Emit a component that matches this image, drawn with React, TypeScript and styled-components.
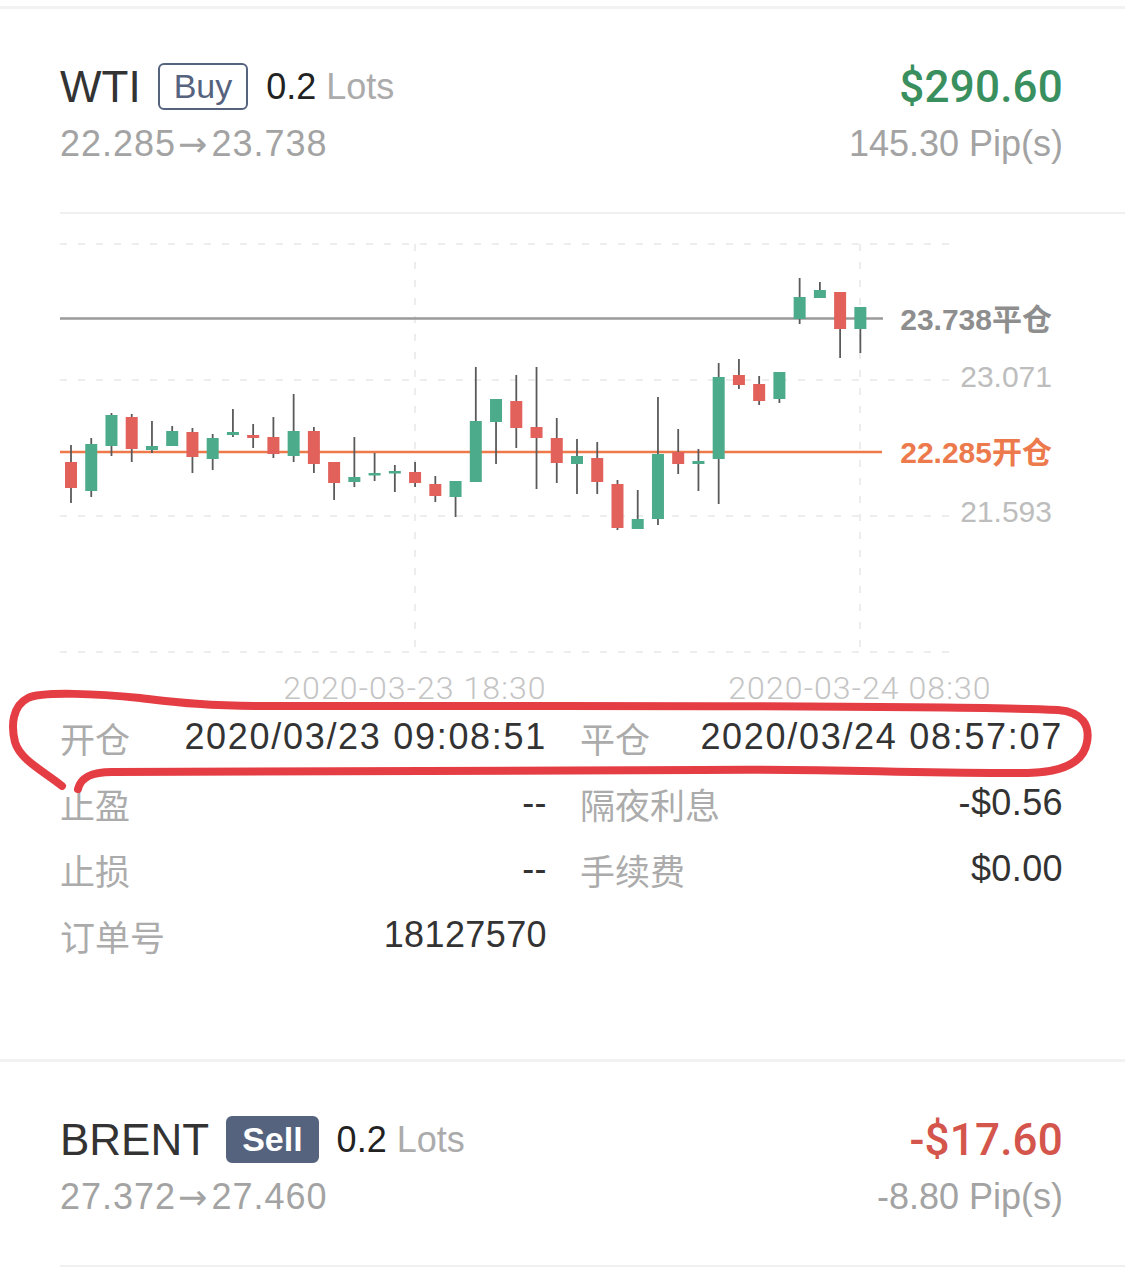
import React from "react";
import styled, { createGlobalStyle } from "styled-components";

const GlobalStyle = createGlobalStyle`
  html, body { margin: 0; padding: 0; background: #ffffff; }
  body {
    font-family: "Liberation Sans", "Noto Sans CJK SC", sans-serif;
    -webkit-font-smoothing: antialiased;
  }
`;

const Page = styled.div`
  width: 1125px;
  padding-top: 6px;
  background: #ffffff;
`;

const Divider = styled.div`
  height: 3px;
  background: #f2f2f2;
`;

const Card = styled.article`
  display: flex;
  flex-direction: column;
`;

const Header = styled.header`
  margin-left: 60px;
  padding: 54px 62px 46px 0;
  border-bottom: 2px solid #f0f0f0;
  display: flex;
  flex-direction: column;
  gap: 12px;
`;

const HeaderRow = styled.div<{ $h: number }>`
  height: ${(p) => p.$h}px;
  display: flex;
  align-items: center;
  justify-content: space-between;
`;

const TitleGroup = styled.div`
  display: flex;
  align-items: center;
  gap: 17px;
`;

const Symbol = styled.span`
  font-size: 44px;
  line-height: 1;
  color: #333333;
`;

const SideBadge = styled.span<{ $filled?: boolean }>`
  box-sizing: border-box;
  height: 47px;
  padding: 0 14px;
  display: flex;
  align-items: center;
  border: 2px solid #56637e;
  border-radius: 6px;
  font-size: 34px;
  font-weight: ${(p) => (p.$filled ? 700 : 400)};
  color: ${(p) => (p.$filled ? "#ffffff" : "#56637e")};
  background: ${(p) => (p.$filled ? "#56637e" : "transparent")};
`;

const Lots = styled.span`
  font-size: 36px;
  color: #222222;
  margin-left: 1px;
`;

const Unit = styled.span`
  color: #ababab;
`;

const Profit = styled.span<{ $tone: "up" | "down" }>`
  font-family: "Roboto", "Liberation Sans", sans-serif;
  font-size: 44px;
  font-weight: 500;
  letter-spacing: 0.2px;
  color: ${(p) => (p.$tone === "up" ? "#3a8f5f" : "#d4554c")};
`;

const Sub = styled.span`
  font-size: 36px;
  line-height: 44px;
  color: #a3a3a3;
`;

const Route = styled(Sub)`
  letter-spacing: 1px;
`;

const Arrow = styled.span`
  font-family: "DejaVu Sans", sans-serif;
  font-size: 35px;
  padding: 0 3px 0 2px;
`;

const ChartWrap = styled.div`
  padding-left: 60px;
`;

const ChartSvg = styled.svg`
  display: block;
`;

const PriceTag = styled.text<{ $tone: "close" | "open" | "grid" }>`
  font-family: "Liberation Sans", "Noto Sans CJK SC", sans-serif;
  font-size: 30px;
  font-weight: ${(p) => (p.$tone === "grid" ? 300 : 700)};
  fill: ${(p) =>
    p.$tone === "open" ? "#ec7a4c" : p.$tone === "close" ? "#8e8e8e" : "#bdbdbd"};
`;

const TimeTag = styled.text`
  font-family: "Roboto", "Liberation Sans", sans-serif;
  font-size: 32px;
  font-weight: 300;
  letter-spacing: 1.1px;
  fill: #c4c4c4;
`;

const Details = styled.section`
  position: relative;
  margin-top: -10px;
  padding: 0 62px 91px 60px;
  display: grid;
  grid-template-columns: 487px 483px;
  column-gap: 33px;
`;

const Field = styled.div`
  height: 66px;
  display: flex;
  align-items: center;
  justify-content: space-between;
`;

const FieldLabel = styled.span`
  font-family: "Noto Sans CJK SC", sans-serif;
  font-size: 35px;
  color: #ababab;
`;

const FieldValue = styled.span<{ $wide?: boolean }>`
  font-size: 36px;
  color: #333333;
  letter-spacing: ${(p) => (p.$wide ? "1.7px" : "0.4px")};
`;

const Annotation = styled.svg`
  position: absolute;
  left: 0;
  top: -24px;
  pointer-events: none;
`;

type Candle = [number, number, number, number, boolean];

// [bodyTop, bodyBottom, wickTop, wickBottom, rising]
const candles: Candle[] = [
  [462, 488, 445, 503, false],
  [444, 491, 438, 497, true],
  [415, 446, 413, 456, true],
  [417, 449, 414, 462, false],
  [446, 450, 421, 453, true],
  [431, 446, 426, 446, true],
  [432, 457, 428, 473, false],
  [438, 459, 434, 470, true],
  [432, 435, 409, 437, true],
  [435, 438, 424, 448, false],
  [437, 454, 417, 458, false],
  [431, 456, 394, 462, true],
  [431, 464, 427, 473, false],
  [462, 483, 462, 500, false],
  [477, 482, 437, 487, true],
  [473, 475, 453, 481, true],
  [471, 473, 465, 492, true],
  [472, 483, 462, 487, false],
  [484, 496, 476, 502, false],
  [481, 497, 481, 517, true],
  [421, 482, 367, 482, true],
  [399, 422, 399, 464, true],
  [401, 428, 375, 448, false],
  [427, 438, 367, 489, false],
  [438, 463, 418, 483, false],
  [456, 464, 439, 494, true],
  [458, 482, 442, 494, false],
  [484, 528, 480, 530, false],
  [519, 529, 490, 529, true],
  [454, 519, 397, 525, true],
  [452, 464, 429, 474, false],
  [461, 464, 449, 491, true],
  [377, 459, 363, 504, true],
  [375, 385, 359, 389, false],
  [384, 401, 376, 405, false],
  [372, 399, 372, 403, true],
  [297, 319, 278, 324, true],
  [290, 298, 282, 298, true],
  [292, 329, 292, 358, false],
  [307, 329, 307, 353, true],
];

const gridYs = [244, 380, 516, 652];
const gridXs = [415, 860];

function Chart() {
  return (
    <ChartWrap>
      <ChartSvg width={1065} height={500} viewBox="60 214 1065 500">
        {gridYs.map((y) => (
          <line key={`h${y}`} x1={60} x2={955} y1={y} y2={y} stroke="#e8e8e8" strokeWidth={1.5} strokeDasharray="7 11" />
        ))}
        {gridXs.map((x) => (
          <line key={`v${x}`} x1={x} x2={x} y1={244} y2={652} stroke="#e8e8e8" strokeWidth={1.5} strokeDasharray="7 11" />
        ))}
        <line x1={60} x2={883} y1={318.5} y2={318.5} stroke="#9a9a9a" strokeWidth={2.5} />
        <line x1={60} x2={882} y1={452} y2={452} stroke="#ee7a4c" strokeWidth={2.5} />
        {candles.map(([bt, bb, wt, wb, up], i) => {
          const x = 71 + i * 20.24;
          const color = up ? "#4cab8b" : "#e2615a";
          const h = Math.max(bb - bt, 2.5);
          return (
            <g key={i}>
              <line x1={x} x2={x} y1={wt} y2={wb} stroke="#5a5a5a" strokeWidth={1.8} />
              <rect x={x - 6} y={bt} width={12} height={h} fill={color} />
            </g>
          );
        })}
        <PriceTag $tone="close" x={1052} y={330} textAnchor="end">23.738平仓</PriceTag>
        <PriceTag $tone="grid" x={1052} y={387} textAnchor="end">23.071</PriceTag>
        <PriceTag $tone="open" x={1052} y={463} textAnchor="end">22.285开仓</PriceTag>
        <PriceTag $tone="grid" x={1052} y={522} textAnchor="end">21.593</PriceTag>
        <TimeTag x={415} y={699} textAnchor="middle">2020-03-23 18:30</TimeTag>
        <TimeTag x={860} y={699} textAnchor="middle">2020-03-24 08:30</TimeTag>
      </ChartSvg>
    </ChartWrap>
  );
}

function DetailGrid() {
  return (
    <Details>
      <Field><FieldLabel>开仓</FieldLabel><FieldValue $wide>2020/03/23 09:08:51</FieldValue></Field>
      <Field><FieldLabel>平仓</FieldLabel><FieldValue $wide>2020/03/24 08:57:07</FieldValue></Field>
      <Field><FieldLabel>止盈</FieldLabel><FieldValue>--</FieldValue></Field>
      <Field><FieldLabel>隔夜利息</FieldLabel><FieldValue>-$0.56</FieldValue></Field>
      <Field><FieldLabel>止损</FieldLabel><FieldValue>--</FieldValue></Field>
      <Field><FieldLabel>手续费</FieldLabel><FieldValue>$0.00</FieldValue></Field>
      <Field><FieldLabel>订单号</FieldLabel><FieldValue>18127570</FieldValue></Field>
      <Field />
      <Annotation width={1125} height={120} viewBox="0 680 1125 120">
        <path
          d="M62 786 C45 772 20 760 15 742 C11 726 12 706 28 698 C42 691 100 694 140 698 C175 702 205 706 260 706 L560 706 C800 706 990 707 1058 710 C1083 712 1090 726 1087 742 C1084 760 1068 772 1028 773 C900 774 840 768 700 770 L112 772 C92 772 81 777 78 789"
          fill="none"
          stroke="#e53d44"
          strokeWidth={8}
          strokeLinecap="round"
          strokeLinejoin="round"
        />
      </Annotation>
    </Details>
  );
}

type Trade = {
  symbol: string;
  side: "Buy" | "Sell";
  lots: string;
  open: string;
  close: string;
  profit: string;
  pips: string;
};

function TradeHeader({ t }: { t: Trade }) {
  return (
    <Header>
      <HeaderRow $h={47}>
        <TitleGroup>
          <Symbol>{t.symbol}</Symbol>
          <SideBadge $filled={t.side === "Sell"}>{t.side}</SideBadge>
          <Lots>
            {t.lots} <Unit>Lots</Unit>
          </Lots>
        </TitleGroup>
        <Profit $tone={t.profit.startsWith("-") ? "down" : "up"}>{t.profit}</Profit>
      </HeaderRow>
      <HeaderRow $h={44}>
        <Route>
          {t.open}
          <Arrow>→</Arrow>
          {t.close}
        </Route>
        <Sub>{t.pips}</Sub>
      </HeaderRow>
    </Header>
  );
}

const wti: Trade = {
  symbol: "WTI",
  side: "Buy",
  lots: "0.2",
  open: "22.285",
  close: "23.738",
  profit: "$290.60",
  pips: "145.30 Pip(s)",
};

const brent: Trade = {
  symbol: "BRENT",
  side: "Sell",
  lots: "0.2",
  open: "27.372",
  close: "27.460",
  profit: "-$17.60",
  pips: "-8.80 Pip(s)",
};

export default function App() {
  return (
    <Page>
      <GlobalStyle />
      <Divider />
      <Card>
        <TradeHeader t={wti} />
        <Chart />
        <DetailGrid />
      </Card>
      <Divider />
      <Card>
        <TradeHeader t={brent} />
      </Card>
    </Page>
  );
}
